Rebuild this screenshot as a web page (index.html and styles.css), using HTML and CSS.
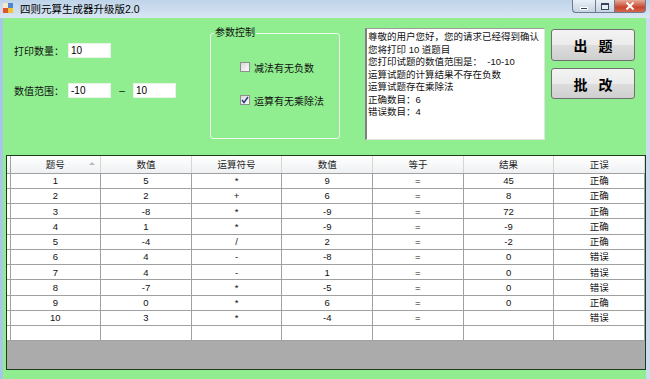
FILE: index.html
```html
<!DOCTYPE html>
<html lang="zh-CN">
<head>
    <meta charset="UTF-8">
    <meta name="viewport" content="width=device-width, initial-scale=1.0">
    <title>四则元算生成器升级版2.0</title>
    <link rel="stylesheet" href="styles.css">
</head>
<body>

<div class="window">
    <header class="titlebar">
        <div class="title">
            <svg class="app-icon" viewBox="0 0 11 11">
                <rect x="0" y="5" width="5" height="5" fill="#e0542c"/>
                <rect x="5" y="5" width="5" height="5" fill="#f2c230"/>
                <rect x="5" y="0" width="5" height="5" fill="#4d86d0"/>
                <rect x="0" y="0" width="5" height="5" fill="#f6e9c8"/>
            </svg>
            <span>四则元算生成器升级版2.0</span>
        </div>
        <div class="controls">
            <span class="ctl min"><i class="min-glyph"></i></span>
            <span class="ctl max"><i class="max-glyph"></i></span>
            <span class="ctl close">
                <svg viewBox="0 0 10 8" width="10" height="8">
                    <path d="M1.5 0.5 L8.5 7.5 M8.5 0.5 L1.5 7.5" stroke="#fff" stroke-width="2"/>
                </svg>
            </span>
        </div>
    </header>

    <div class="frame">
        <main class="client">
            <section class="top">
                <div class="settings">
                    <div class="field">
                        <label>打印数量：</label>
                        <input type="text" value="10">
                    </div>
                    <div class="field">
                        <label>数值范围：</label>
                        <input type="text" value="-10">
                        <span class="dash">–</span>
                        <input type="text" value="10">
                    </div>
                </div>

                <fieldset class="group">
                    <legend>参数控制</legend>
                    <label class="check"><span class="box"></span>减法有无负数</label>
                    <label class="check">
                        <span class="box">
                            <svg viewBox="0 0 8 8" width="8" height="8">
                                <path d="M1 4 L3 6.5 L7 1" fill="none" stroke="#2b3a78" stroke-width="1.4"/>
                            </svg>
                        </span>运算有无乘除法
                    </label>
                </fieldset>

                <div class="output">
                    <p>尊敬的用户您好，您的请求已经得到确认</p>
                    <p>您将打印 10 道题目</p>
                    <p>您打印试题的数值范围是：&nbsp; -10-10</p>
                    <p>运算试题的计算结果不存在负数</p>
                    <p>运算试题存在乘除法</p>
                    <p>正确数目：6</p>
                    <p>错误数目：4</p>
                </div>

                <div class="actions">
                    <button class="btn-make">出<span class="gap"></span>题</button>
                    <button class="btn-check">批<span class="gap"></span>改</button>
                </div>
            </section>

            <section class="grid">
                <table>
                    <colgroup>
                        <col class="rh-col">
                        <col><col><col><col><col><col><col>
                    </colgroup>
                    <thead>
                        <tr>
                            <th class="rh"></th>
                            <th class="sorted">题号</th>
                            <th>数值</th>
                            <th>运算符号</th>
                            <th>数值</th>
                            <th>等于</th>
                            <th>结果</th>
                            <th>正误</th>
                        </tr>
                    </thead>
                    <tbody>
                        <tr><td class="rh"></td><td>1</td><td>5</td><td>*</td><td>9</td><td>=</td><td>45</td><td>正确</td></tr>
                        <tr><td class="rh"></td><td>2</td><td>2</td><td>+</td><td>6</td><td>=</td><td>8</td><td>正确</td></tr>
                        <tr><td class="rh"></td><td>3</td><td>-8</td><td>*</td><td>-9</td><td>=</td><td>72</td><td>正确</td></tr>
                        <tr><td class="rh"></td><td>4</td><td>1</td><td>*</td><td>-9</td><td>=</td><td>-9</td><td>正确</td></tr>
                        <tr><td class="rh"></td><td>5</td><td>-4</td><td>/</td><td>2</td><td>=</td><td>-2</td><td>正确</td></tr>
                        <tr><td class="rh"></td><td>6</td><td>4</td><td>-</td><td>-8</td><td>=</td><td>0</td><td>错误</td></tr>
                        <tr><td class="rh"></td><td>7</td><td>4</td><td>-</td><td>1</td><td>=</td><td>0</td><td>错误</td></tr>
                        <tr><td class="rh"></td><td>8</td><td>-7</td><td>*</td><td>-5</td><td>=</td><td>0</td><td>错误</td></tr>
                        <tr><td class="rh"></td><td>9</td><td>0</td><td>*</td><td>6</td><td>=</td><td>0</td><td>正确</td></tr>
                        <tr><td class="rh"></td><td>10</td><td>3</td><td>*</td><td>-4</td><td>=</td><td></td><td>错误</td></tr>
                        <tr><td class="rh"></td><td></td><td></td><td></td><td></td><td></td><td></td><td></td></tr>
                    </tbody>
                </table>
            </section>
        </main>
    </div>
</div>

</body>
</html>
```

FILE: styles.css
```css
/* Basic reset */
* {
    margin: 0;
    padding: 0;
    box-sizing: border-box;
}

body {
    width: 650px;
    height: 379px;
    overflow: hidden;
    font-family: "Liberation Sans", "Noto Sans CJK SC", sans-serif;
    font-size: 10px;
    color: #111;
    background-color: #cfdeee;
}

.window {
    display: flex;
    flex-direction: column;
    height: 379px;
}

/* Title bar */
.titlebar {
    height: 18px;
    display: flex;
    justify-content: space-between;
    align-items: flex-start;
    padding: 0 4px 0 3px;
    background: linear-gradient(#bfd3e9, #d9e6f3);
}

.title {
    display: flex;
    align-items: center;
    gap: 6px;
    height: 16px;
    font-size: 10.5px;
    color: #000;
}

.app-icon {
    width: 11px;
    height: 11px;
}

.controls {
    display: flex;
}

.ctl {
    height: 13px;
    display: flex;
    align-items: center;
    justify-content: center;
    border: 1px solid #6c7c90;
    border-top: none;
    background: linear-gradient(#eaf0f7, #c6d3e2);
}

.ctl.min {
    width: 23px;
    border-right: none;
    border-radius: 0 0 0 4px;
}

.ctl.max {
    width: 20px;
}

.ctl.close {
    width: 31px;
    border-left: none;
    border-radius: 0 0 4px 0;
    background: linear-gradient(#e8ab9a, #c8452e 60%, #d7664f);
}

.min-glyph {
    width: 8px;
    height: 3px;
    margin-top: 4px;
    background-color: #39465a;
    border: 1px solid #fff;
}

.max-glyph {
    width: 8px;
    height: 7px;
    border: 1px solid #39465a;
    border-top-width: 2px;
    background-color: #e9eef5;
}

/* Window frame and client area */
.frame {
    flex: 1;
    display: flex;
    border-left: 3px solid #a8c6e7;
    border-right: 4px solid #cbdcee;
}

.client {
    flex: 1;
    display: flex;
    flex-direction: column;
    background-color: #90ee90;
}

.top {
    height: 137px;
    display: flex;
    align-items: flex-start;
}

/* Left inputs */
.settings {
    width: 173px;
    padding: 25px 0 0 11px;
    display: flex;
    flex-direction: column;
    gap: 25px;
}

.field {
    display: flex;
    align-items: center;
    height: 15px;
}

.field label {
    width: 54px;
}

.field input {
    width: 43px;
    height: 15px;
    padding: 0 2px;
    border: 1px solid #e8f2e8;
    background-color: #fff;
    font: inherit;
    color: #000;
}

.dash {
    width: 22px;
    text-align: center;
}

/* Group box */
.group {
    margin: 9px 0 0 34px;
    width: 130px;
    height: 112px;
    padding: 22px 0 0 0;
    border: 1px solid #eef7ee;
    border-radius: 3px;
    display: flex;
    flex-direction: column;
    gap: 21px;
}

.group legend {
    margin-left: 3px;
    padding: 0 1px;
    line-height: 12px;
}

.check {
    display: flex;
    align-items: center;
    gap: 4px;
    height: 12px;
    margin-left: 29px;
}

.box {
    width: 10px;
    height: 10px;
    display: flex;
    align-items: center;
    justify-content: center;
    border: 1px solid #8e8f8f;
    background: linear-gradient(135deg, #d9d9d9, #fbfbfb);
}

/* Message box */
.output {
    margin: 10px 0 0 25px;
    width: 180px;
    height: 112px;
    padding: 2px 1px;
    background-color: #fff;
    border: 1px solid #e2e2e2;
    border-left: 2px solid #808080;
    border-top-color: #9a9a9a;
    font-size: 9.5px;
    line-height: 12.5px;
    white-space: nowrap;
    overflow: hidden;
}

/* Buttons */
.actions {
    margin: 11px 0 0 6px;
    width: 84px;
    display: flex;
    flex-direction: column;
    gap: 7px;
}

.actions button {
    height: 32px;
    display: flex;
    align-items: center;
    justify-content: center;
    border: 1px solid #707070;
    border-radius: 3px;
    background: linear-gradient(#f3f3f3, #ebebeb 50%, #dddddd 50%, #cfcfcf);
    font-family: "Noto Sans CJK SC", sans-serif;
    font-size: 14px;
    font-weight: bold;
    color: #000;
}

.actions .gap {
    width: 11px;
}

.actions .btn-check {
    height: 31px;
}

/* Data grid */
.grid {
    margin-left: 3px;
    width: 640px;
    height: 215px;
    border: 1px solid #1d3b1d;
    background-color: #ababab;
}

.grid table {
    width: 638px;
    border-collapse: collapse;
    table-layout: fixed;
}

.grid .rh-col {
    width: 3px;
}

.grid th,
.grid td {
    text-align: center;
    font-size: 9.5px;
    font-weight: normal;
    border-right: 1px solid #a0a0a0;
    border-bottom: 1px solid #a0a0a0;
    white-space: nowrap;
}

.grid th {
    height: 17px;
    position: relative;
    color: #222;
    background: linear-gradient(#ffffff, #eef0f2);
    border-right-color: #d6d6d6;
}

.grid td {
    height: 15.25px;
    line-height: 13px;
    background-color: #fff;
}

.grid .rh {
    border-right-color: #a0a0a0;
}

/* Sort arrow on first column */
.grid th.sorted::after {
    content: "";
    position: absolute;
    right: 5px;
    top: 6px;
    border-left: 3px solid transparent;
    border-right: 3px solid transparent;
    border-bottom: 3px solid #b4bcc6;
}
```
